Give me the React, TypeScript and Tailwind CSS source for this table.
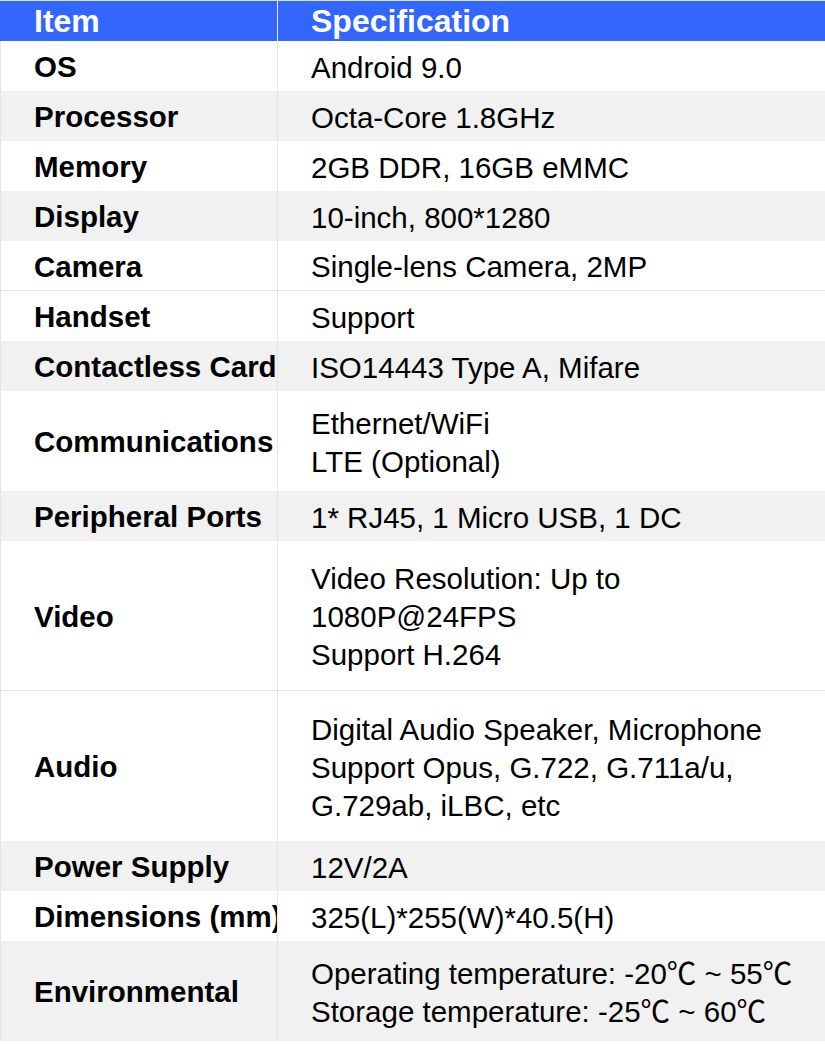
const rows: { item: string; spec: string[]; gray?: boolean }[] = [
  { item: 'OS', spec: ['Android 9.0'] },
  { item: 'Processor', spec: ['Octa-Core 1.8GHz'], gray: true },
  { item: 'Memory', spec: ['2GB DDR, 16GB eMMC'] },
  { item: 'Display', spec: ['10-inch, 800*1280'], gray: true },
  { item: 'Camera', spec: ['Single-lens Camera, 2MP'] },
  { item: 'Handset', spec: ['Support'] },
  { item: 'Contactless Card', spec: ['ISO14443 Type A, Mifare'], gray: true },
  { item: 'Communications', spec: ['Ethernet/WiFi', 'LTE (Optional)'] },
  { item: 'Peripheral Ports', spec: ['1* RJ45, 1 Micro USB, 1 DC'], gray: true },
  { item: 'Video', spec: ['Video Resolution: Up to', '1080P@24FPS', 'Support H.264'] },
  {
    item: 'Audio',
    spec: ['Digital Audio Speaker, Microphone', 'Support Opus, G.722, G.711a/u,', 'G.729ab, iLBC, etc'],
  },
  { item: 'Power Supply', spec: ['12V/2A'], gray: true },
  { item: 'Dimensions (mm)', spec: ['325(L)*255(W)*40.5(H)'] },
  {
    item: 'Environmental',
    spec: ['Operating temperature: -20℃ ~ 55℃', 'Storage temperature: -25℃ ~ 60℃'],
    gray: true,
  },
]

function App(): React.JSX.Element {
  return (
    <div className="min-h-screen bg-white font-[family-name:'Liberation_Sans','Noto_Sans_CJK_SC',sans-serif] text-black">
      <div className="w-[825px] border-t border-[#dde3f0]">
        {/* header */}
        <div className="flex h-10 bg-[#3366ff] text-[32px] font-bold leading-10 text-white">
          <div className="w-[277px] shrink-0 pl-[34px]">Item</div>
          <div className="w-px shrink-0 bg-[#e9eefc]" />
          <div className="flex-1 pl-[33px]">Specification</div>
        </div>

        {/* body */}
        {rows.map((row, i) => {
          const next = rows[i + 1]
          const line = !row.gray && next && !next.gray
          return (
            <div
              key={row.item}
              className={`flex border-l border-[#e4e4e4] ${row.gray ? 'bg-[#f1f1f1]' : 'bg-white'} ${
                line ? 'border-b' : ''
              }`}
              style={{ height: row.spec.length * 50 }}
            >
              <div className="flex w-[276px] shrink-0 items-center overflow-hidden whitespace-nowrap pt-[3px] pl-[33px] text-[29.5px] font-bold">
                {row.item}
              </div>
              <div className="w-px shrink-0 bg-[#e6e6e6]" />
              <div className="flex flex-1 flex-col justify-center pt-[3px] pl-[33px] text-[29.5px] leading-[38px] whitespace-nowrap">
                {row.spec.map((s) => (
                  <div key={s}>{s}</div>
                ))}
              </div>
            </div>
          )
        })}
      </div>
    </div>
  )
}

export default App
